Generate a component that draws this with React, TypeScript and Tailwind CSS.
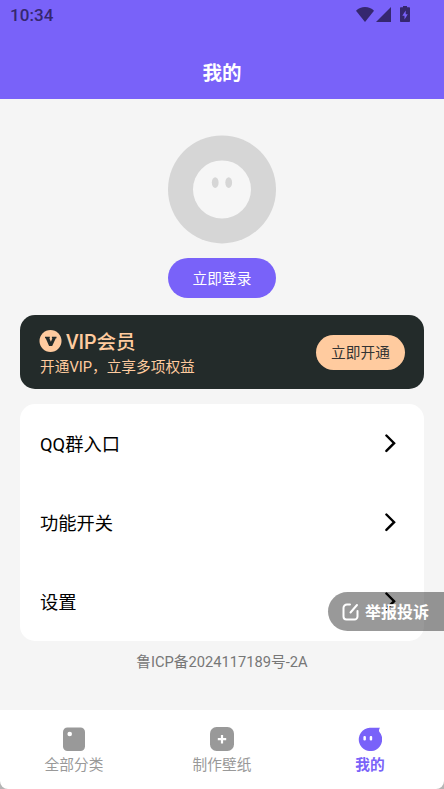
import type { ReactNode } from 'react';

const menuItems = ['QQ群入口', '功能开关', '设置'];

function StatusBar() {
  return (
    <div className="flex h-[30px] items-start justify-between pl-[10px] pr-[34px] pt-[6px] text-[#35276f]">
      <span className="text-[17px] font-medium leading-[19px] tracking-[0.1px]">10:34</span>
      <div className="flex items-start">
        <svg className="mt-px h-[15px] w-[18px]" viewBox="0 0 18 15" fill="currentColor">
          <path d="M0 3.700C2.500 1.200 5.500 0 9 0s6.500 1.200 9 3.700L9 15z" />
        </svg>
        <svg className="ml-[2px] mt-px h-[15px] w-[15px]" viewBox="0 0 15 15" fill="currentColor">
          <path d="M0 15L15 0V15z" />
        </svg>
        <svg className="ml-[9px] h-[16px] w-[10px]" viewBox="0 0 10 16">
          <path
            d="M3 0h4v1.300h2.200a.8.8 0 0 1 .8.8v13.100a.8.8 0 0 1-.8.800H.8a.8.8 0 0 1-.8-.8V2.100a.8.8 0 0 1 .8-.8H3z"
            fill="currentColor"
          />
          <path d="M5.700 4.500L2.300 9.700h2.200v3.800l3.300-5.200H5.700z" fill="#7962f9" />
        </svg>
      </div>
    </div>
  );
}

function Avatar() {
  return (
    <svg className="h-[109px] w-[108px]" viewBox="0 0 108 109">
      <circle cx="54" cy="54.400" r="54" fill="#d6d6d6" />
      <circle cx="54" cy="54.400" r="29" fill="#f6f6f6" />
      <ellipse cx="47.200" cy="47.600" rx="3.400" ry="5.300" fill="#d6d6d6" />
      <ellipse cx="60.700" cy="47.600" rx="3.400" ry="5.300" fill="#d6d6d6" />
    </svg>
  );
}

function VipCard() {
  return (
    <div className="mt-[17px] flex h-[74px] items-center justify-between rounded-[15px] bg-[#232b2a] pl-[19px] pr-[19px] text-[#ffcb9f]">
      <div className="pt-[3px]">
        <div className="flex items-center">
          <svg className="-mt-px h-[22px] w-[23px]" viewBox="0 0 23 22">
            <circle cx="11.500" cy="11" r="11" fill="#ffcb9f" />
            <path d="M6 6.800h4.800v1.500h-.5l1.600 3.500 1.500-3.500h-.5V6.800h4.600v1.500h-.7L13.200 16h-3.100L6.700 8.300H6z" fill="#232b2a" />
          </svg>
          <span className="ml-1 pt-px text-[19.500px] font-medium leading-[25px]">VIP会员</span>
        </div>
        <div className="pl-px text-[14.700px] leading-6">开通VIP，立享多项权益</div>
      </div>
      <button className="h-[35px] w-[89px] rounded-full bg-[#ffcb9f] pt-[2px] text-[14.700px] text-[#333333]">立即开通</button>
    </div>
  );
}

function MenuRow({ label }: { label: string }) {
  return (
    <div className="flex h-[79px] items-center justify-between pl-5 pr-[28.500px] text-[18.300px] text-black">
      <span className="pt-[2px]">{label}</span>
      <svg className="h-[19px] w-[11px]" viewBox="0 0 11 19" fill="none" stroke="currentColor" strokeWidth="2.400">
        <path d="M1.400 1.500l7.700 7.700-7.700 7.700" strokeLinecap="round" />
      </svg>
    </div>
  );
}

function ReportButton() {
  return (
    <button className="absolute right-0 top-[592px] flex h-[39px] w-[116px] items-center rounded-l-full bg-black/40 pl-[14px] text-white">
      <svg
        className="h-[18px] w-[17px]"
        viewBox="0 0 17 18"
        fill="none"
        stroke="currentColor"
        strokeWidth="2"
        strokeLinecap="round"
      >
        <path d="M8 1.500H5A3.500 3.500 0 0 0 1.500 5v8.500A3 3 0 0 0 4.500 16.500h8a3 3 0 0 0 3-3V8" />
        <path d="M15 2L8.500 9.500" />
      </svg>
      <span className="ml-[6px] whitespace-nowrap pt-[2px] text-[16px] font-bold">举报投诉</span>
    </button>
  );
}

function Tab({ label, active, children }: { label: string; active?: boolean; children: ReactNode }) {
  return (
    <div className={`flex flex-1 flex-col items-center pt-[17px] ${active ? 'font-bold text-[#7962f9]' : 'text-[#999999]'}`}>
      <svg className="h-6 w-6" viewBox="0 0 24 24">
        {children}
      </svg>
      <span className="text-[14.700px] leading-[28px]">{label}</span>
    </div>
  );
}

export default function App() {
  return (
    <div className="relative flex h-[789px] w-[444px] flex-col overflow-hidden bg-[#f5f5f5] font-[Roboto,'Noto_Sans_CJK_SC',sans-serif]">
      <header className="h-[98.500px] bg-[#7962f9]">
        <StatusBar />
        <h1 className="mt-[29px] text-center text-[19.500px] font-bold leading-[30px] text-white">我的</h1>
      </header>

      <main className="flex flex-1 flex-col px-5 pt-[36.500px]">
        <div className="flex flex-col items-center">
          <Avatar />
          <button className="mt-[14px] h-10 w-[108px] rounded-full bg-[#7962f9] pt-[2px] text-[14.700px] text-white">立即登录</button>
        </div>

        <VipCard />

        <div className="mt-[15px] rounded-[15px] bg-white">
          {menuItems.map((item) => (
            <MenuRow key={item} label={item} />
          ))}
        </div>

        <p className="mt-[9px] text-center text-[14.700px] leading-6 text-[#777777]">鲁ICP备2024117189号-2A</p>
      </main>

      <div className="bg-[#b5b5b5]">
        <nav className="flex h-[79px] rounded-b-[8px] bg-white">
          <Tab label="全部分类">
            <rect x="1" y=".5" width="22" height="23.500" rx="4.500" fill="currentColor" />
            <circle cx="7.700" cy="7" r="2.300" fill="white" />
          </Tab>
          <Tab label="制作壁纸">
            <rect width="24" height="24" rx="6.500" fill="currentColor" />
            <path d="M12 8v8.400M7.800 12.200h8.400" stroke="white" strokeWidth="2.200" />
          </Tab>
          <Tab label="我的" active>
            <path
              d="M11.700 .7h10.300c-.9 1.300-1.300 2.800-.7 4A11.700 11.700 0 1 1 11.700 .7z"
              fill="currentColor"
            />
            <rect x="5.400" y="9" width="2.500" height="4.500" rx="1.100" fill="white" />
            <rect x="11.700" y="9" width="2.500" height="4.500" rx="1.100" fill="white" />
          </Tab>
        </nav>
      </div>

      <ReportButton />
    </div>
  );
}
